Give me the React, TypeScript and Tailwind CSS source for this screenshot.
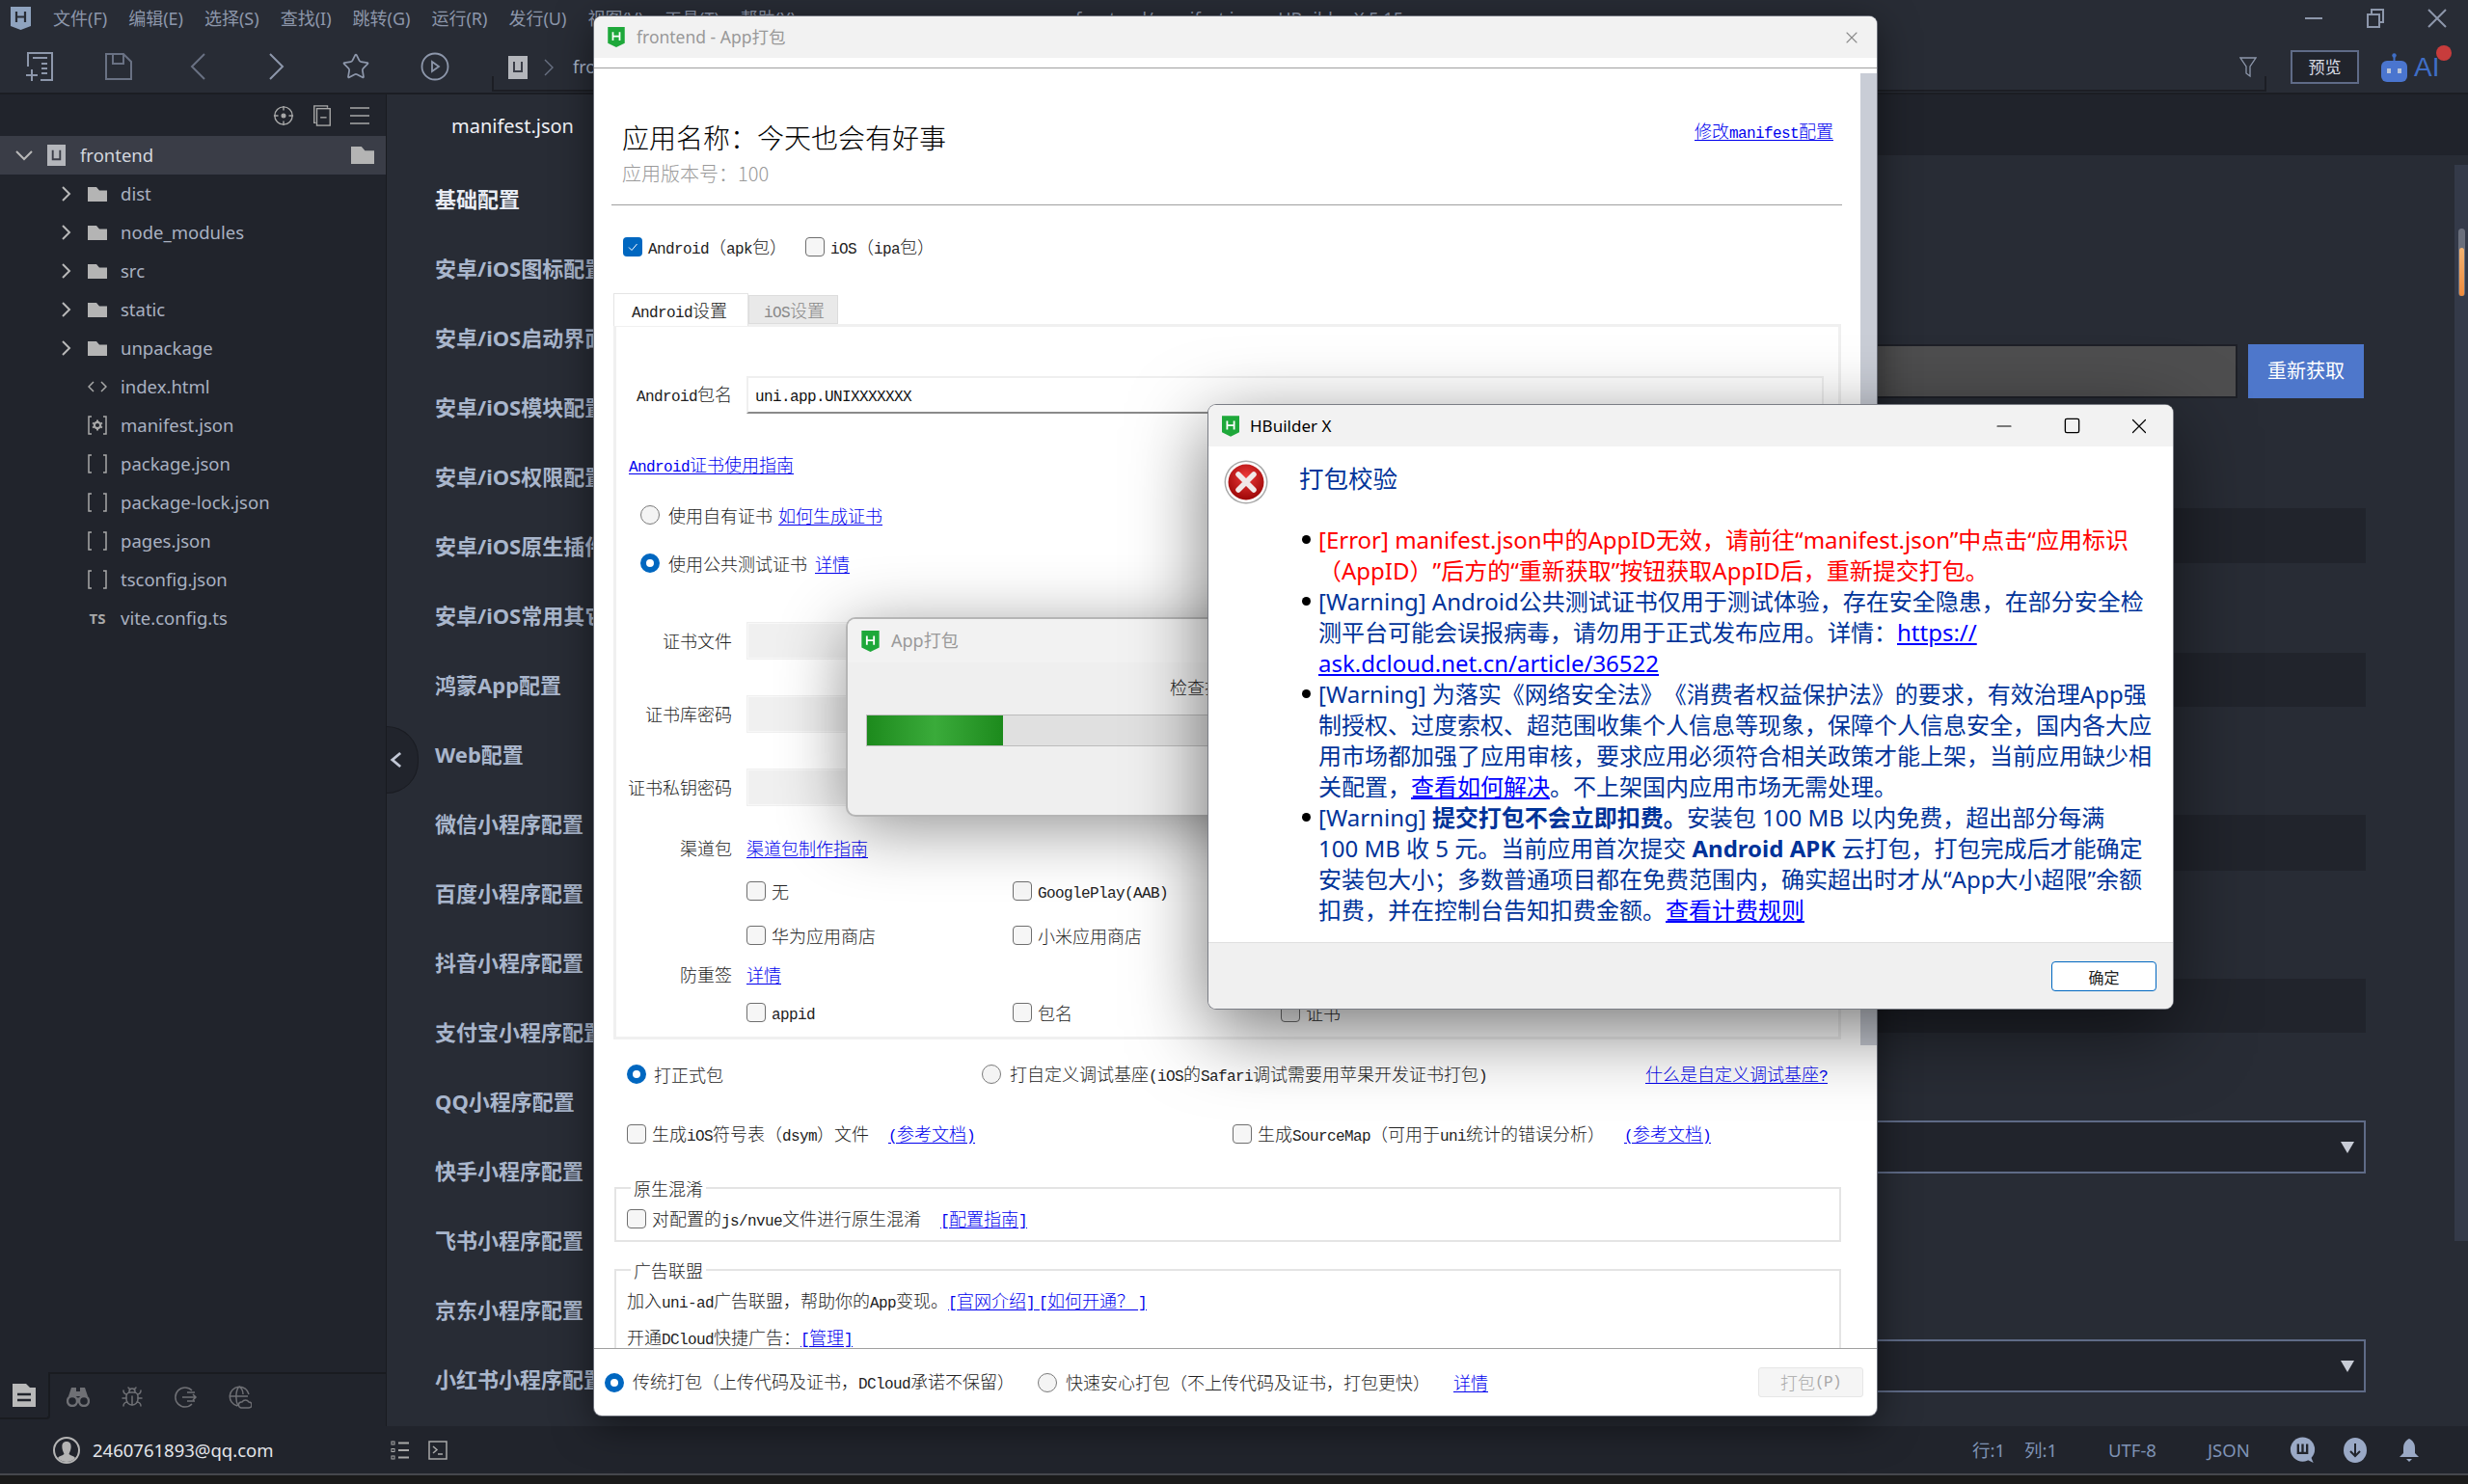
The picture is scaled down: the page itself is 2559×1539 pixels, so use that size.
import React from 'react';
import { Bug, Star, X, Minus, Square } from 'lucide-react';

const ide = "[font-family:'Noto_Sans','Noto_Sans_CJK_SC',sans-serif]";
const song = "[font-family:'Noto_Sans_CJK_SC',sans-serif]";

// latin runs are half width mono, cjk runs stay at the parent size
function S({ children }: { children: string }) {
  const parts = children.split(/([\x21-\x7e]+)/);
  return (
    <>
      {parts.map((p, i) =>
        i % 2 === 1 ? (
          <span key={i} className="[font-family:'Liberation_Mono',monospace] text-[16px] tracking-[-0.6px]">{p}</span>
        ) : (
          <span key={i}>{p}</span>
        ),
      )}
    </>
  );
}

function A({ children, className = '' }: { children: string; className?: string }) {
  return (
    <a className={`text-[#0000ee] underline underline-offset-2 whitespace-nowrap ${className}`}>
      <S>{children}</S>
    </a>
  );
}

function Shield({ className = '' }: { className?: string }) {
  return (
    <svg viewBox="0 0 20 24" className={className}>
      <path d="M0 0H20V19L10 24L0 19Z" fill="#1ea83a" />
      <path d="M6 6V16M14 6V16M6 11H14" stroke="#fff" strokeWidth="2" fill="none" />
    </svg>
  );
}

function UBox({ size = 20 }: { size?: number }) {
  return (
    <svg viewBox="0 0 20 24" width={size} height={size * 1.2} className="shrink-0">
      <rect width="20" height="24" fill="#b4b6bb" />
      <path d="M6 6V16H14V6" stroke="#3a3d47" strokeWidth="2" fill="none" />
    </svg>
  );
}

function Check({ on = false }: { on?: boolean }) {
  return on ? (
    <span className="w-5 h-5 shrink-0 rounded-[4px] bg-[#0067c0] flex items-center justify-center">
      <svg viewBox="0 0 12 12" className="w-3 h-3">
        <path d="M2 6.5L5 9.5L10.5 3" stroke="#fff" strokeWidth="1" fill="none" />
      </svg>
    </span>
  ) : (
    <span className="w-5 h-5 shrink-0 rounded-[4px] bg-[#f6f6f6] border border-[#6f6f6f]" />
  );
}

function Radio({ on = false }: { on?: boolean }) {
  return on ? (
    <span className="w-5 h-5 shrink-0 rounded-full bg-white border-[6px] border-[#0067c0]" />
  ) : (
    <span className="w-5 h-5 shrink-0 rounded-full bg-[#f4f4f4] border border-[#7a7a7a]" />
  );
}

function FormField({ label, value, mt }: { label: string; value?: string; mt: string }) {
  return (
    <div className={`flex items-center h-[39px] ${mt}`}>
      <div className="w-[120px] text-right whitespace-nowrap"><S>{label}</S></div>
      <div className={`ml-[15px] w-[1117px] h-full flex items-center px-[7px] border-2 ${value ? 'border-[#efefef] border-b-[#8a8a8a] bg-white' : 'border-[#efefef] bg-[#f0f0f0] outline outline-1 -outline-offset-2 outline-[#f8f8f8]'}`}>
        {value && <span className="text-[#111]"><S>{value}</S></span>}
      </div>
    </div>
  );
}

function CheckCell({ label, w }: { label: string; w: string }) {
  return (
    <div className={`flex items-center gap-[6px] ${w}`}>
      <Check />
      <span className="whitespace-nowrap"><S>{label}</S></span>
    </div>
  );
}

function PackDialog() {
  return (
    <div className={`absolute left-[616px] top-[17px] w-[1330px] h-[1451px] bg-white rounded-lg overflow-hidden flex flex-col ring-1 ring-[#6a6e78] shadow-[0_10px_40px_rgba(0,0,0,0.5)] text-[18px] font-light text-[#222] ${song}`}>
      <div className="h-[43px] shrink-0 bg-[#f2f2f2] flex items-center pl-[14px] pr-[16px]">
        <Shield className="w-[18px] h-[21px]" />
        <span className={`ml-3 text-[17.5px] text-[#999] font-normal ${ide}`}>frontend - App打包</span>
        <X className="ml-auto w-[20px] h-[20px] text-[#8a8a8a]" strokeWidth={1.3} />
      </div>
      <div className="mt-[10px] flex-1 min-h-0 flex border-t border-[#a0a0a0] overflow-hidden">
        <div className="w-[1313px] shrink-0 pl-[18px] pr-[19px] overflow-hidden">
          <div className="mt-[49px] h-[45px] pl-[11px] flex items-start justify-between">
            <div className="text-[28px] leading-[44px] text-black whitespace-nowrap">应用名称：今天也会有好事</div>
            <A className="mt-[2px] mr-[9px] text-[18px]">修改manifest配置</A>
          </div>
          <div className="h-[30px] pl-[11px] text-[20px] leading-[30px] text-[#9a9a9a]">应用版本号：100</div>
          <div className="mt-[17px] h-px bg-[#a0a0a0]" />

          <div className="mt-[29px] h-[28px] pl-[12px] flex items-center">
            <div className="flex items-center gap-[6px] w-[189px]"><Check on /><span className="whitespace-nowrap"><S>Android（apk包）</S></span></div>
            <div className="flex items-center gap-[6px]"><Check /><span className="whitespace-nowrap"><S>iOS（ipa包）</S></span></div>
          </div>

          <div className="mt-[34px] h-[34px] pl-[2px] flex items-end relative z-10">
            <div className="w-[140px] h-[34px] bg-white border border-b-0 border-[#e4e4e4] pl-[18px] leading-[32px] whitespace-nowrap"><S>Android设置</S></div>
            <div className="w-[93px] h-[30px] mb-[2px] bg-[#e9e9e9] border border-[#dcdcdc] pl-[15px] leading-[28px] text-[#888] whitespace-nowrap"><S>iOS设置</S></div>
          </div>

          <div className="-mt-[2px] ml-[2px] mr-[1px] h-[742px] border-[3px] border-[#f0f0f0] overflow-hidden">
            <FormField label="Android包名" value="uni.app.UNIXXXXXXX" mt="mt-[51px]" />
            <div className="mt-[40px] h-6 pl-[13px] leading-6"><A>Android证书使用指南</A></div>
            <div className="mt-[29px] h-6 pl-[25px] flex items-center gap-[9px]">
              <Radio />
              <span className="whitespace-nowrap">使用自有证书</span>
              <A className="-ml-[3px]">如何生成证书</A>
            </div>
            <div className="mt-[26px] h-6 pl-[25px] flex items-center gap-[9px]">
              <Radio on />
              <span className="whitespace-nowrap">使用公共测试证书</span>
              <A className="-ml-[1px]">详情</A>
            </div>
            <FormField label="证书文件" mt="mt-[49px]" />
            <FormField label="证书库密码" mt="mt-[37px]" />
            <FormField label="证书私钥密码" mt="mt-[37px]" />
            <div className="mt-[31px] h-6 flex items-center">
              <div className="w-[120px] text-right">渠道包</div>
              <A className="ml-[15px]">渠道包制作指南</A>
            </div>
            <div className="mt-[21px] h-6 pl-[135px] flex items-center">
              <CheckCell label="无" w="w-[276px]" />
              <CheckCell label="GooglePlay(AAB)" w="w-[278px]" />
              <CheckCell label="360应用商店" w="w-[276px]" />
            </div>
            <div className="mt-[22px] h-6 pl-[135px] flex items-center">
              <CheckCell label="华为应用商店" w="w-[276px]" />
              <CheckCell label="小米应用商店" w="w-[278px]" />
              <CheckCell label="应用宝" w="w-[276px]" />
            </div>
            <div className="mt-[16px] h-6 flex items-center">
              <div className="w-[120px] text-right">防重签</div>
              <A className="ml-[15px]">详情</A>
            </div>
            <div className="mt-[16px] h-6 pl-[135px] flex items-center">
              <CheckCell label="appid" w="w-[276px]" />
              <CheckCell label="包名" w="w-[278px]" />
              <CheckCell label="证书" w="w-[276px]" />
            </div>
          </div>

          <div className="mt-[24px] h-6 pl-[16px] flex items-center">
            <div className="w-[368px] flex items-center gap-[8px]"><Radio on /><span>打正式包</span></div>
            <div className="flex items-center gap-[9px] whitespace-nowrap"><Radio /><span><S>打自定义调试基座(iOS的Safari调试需要用苹果开发证书打包)</S></span></div>
            <A className="ml-auto mr-[15px]">什么是自定义调试基座?</A>
          </div>

          <div className="mt-[38px] h-6 pl-[16px] flex items-center">
            <div className="w-[628px] flex items-center gap-[6px]">
              <Check />
              <span className="w-[239px] whitespace-nowrap"><S>生成iOS符号表（dsym）文件</S></span>
              <A>(参考文档)</A>
            </div>
            <div className="flex items-center gap-[6px]">
              <Check />
              <span className="w-[374px] whitespace-nowrap"><S>生成SourceMap（可用于uni统计的错误分析）</S></span>
              <A>(参考文档)</A>
            </div>
          </div>

          <fieldset className="mt-[32px] ml-[3px] mr-[1px] pl-[11px] pb-[10px] border-2 border-[#e4e4e4]">
            <legend className="ml-[4px] px-[3px] h-6 leading-6">原生混淆</legend>
            <div className="mt-[8px] h-6 flex items-center gap-[6px]">
              <Check />
              <span className="whitespace-nowrap"><S>对配置的js/nvue文件进行原生混淆</S></span>
              <A className="ml-[14px]">[配置指南]</A>
            </div>
          </fieldset>

          <fieldset className="mt-[17px] ml-[3px] mr-[1px] pl-[11px] pb-[10px] border-2 border-[#e4e4e4]">
            <legend className="ml-[4px] px-[3px] h-6 leading-6">广告联盟</legend>
            <div className="mt-[7px] h-6 leading-6 whitespace-nowrap">
              <S>加入uni-ad广告联盟，帮助你的App变现。</S>
              <A>[官网介绍] [如何开通？ ]</A>
            </div>
            <div className="mt-[14px] h-6 leading-6 whitespace-nowrap">
              <S>开通DCloud快捷广告：</S>
              <A>[管理]</A>
            </div>
          </fieldset>
        </div>
        <div className="flex-1 mt-[5px]">
          <div className="h-[1008px] bg-[#c9cdd6]" />
        </div>
      </div>
      <div className="h-[70px] shrink-0 border-t border-[#a0a0a0] pl-[11px] pr-[14px] flex items-center">
        <div className="w-[449px] flex items-center gap-[9px] whitespace-nowrap"><Radio on /><span><S>传统打包（上传代码及证书，DCloud承诺不保留）</S></span></div>
        <div className="flex items-center gap-[9px] whitespace-nowrap"><Radio /><span className="w-[402px]">快速安心打包（不上传代码及证书，打包更快）</span></div>
        <A>详情</A>
        <div className="ml-auto w-[109px] h-[31px] bg-[#f5f5f5] border border-[#e6e6e6] rounded-[3px] flex items-center justify-center text-[#a8a8a8]"><S>打包(P)</S></div>
      </div>
    </div>
  );
}

function ProgressDialog() {
  return (
    <div className={`absolute left-[879px] top-[642px] w-[640px] h-[203px] bg-[#efefef] rounded-lg overflow-hidden ring-2 ring-[#b5b5b5] shadow-[0_12px_70px_rgba(0,0,0,0.45)] ${song}`}>
      <div className="h-[45px] bg-[#f2f2f2] flex items-center pl-[14px]">
        <Shield className="w-[19px] h-[22px]" />
        <span className={`ml-3 text-[18px] text-[#999] ${ide}`}>App打包</span>
      </div>
      <div className="mt-[13px] h-6 pl-[334px] text-[18px] leading-6 font-light text-[#222] whitespace-nowrap">检查打包参数...</div>
      <div className="mt-[17px] ml-[19px] mr-[19px] h-[33px] bg-[#e0e0e0] border border-[#bcbcbc]">
        <div className="w-[141px] h-full bg-gradient-to-r from-[#1c8a1c] via-[#3aab3a] to-[#1c8a1c]" />
      </div>
    </div>
  );
}

function ErrorIcon() {
  return (
    <svg viewBox="0 0 46 46" className="w-[46px] h-[46px] shrink-0 mt-[7px]">
      <defs>
        <radialGradient id="errRed" cx="50%" cy="35%" r="65%">
          <stop offset="0%" stopColor="#ee3a3a" />
          <stop offset="100%" stopColor="#9c0606" />
        </radialGradient>
      </defs>
      <circle cx="23" cy="23" r="22.5" fill="#a9a9a9" />
      <circle cx="23" cy="23" r="21" fill="#fff" />
      <circle cx="23" cy="23" r="18.5" fill="url(#errRed)" />
      <path d="M15 15L31 31M31 15L15 31" stroke="#f1e9e9" strokeWidth="5.5" strokeLinecap="round" />
    </svg>
  );
}

function Item({ children, className = '' }: { children: React.ReactNode; className?: string }) {
  return (
    <li className={`flex ${className}`}>
      <span className="w-[9px] h-[9px] mt-[11px] mr-[8px] shrink-0 rounded-full bg-black" />
      <div>{children}</div>
    </li>
  );
}

function AlertDialog() {
  const link = 'text-[#0000ff] underline';
  return (
    <div className={`absolute left-[1253px] top-[420px] w-[1000px] h-[626px] bg-white rounded-lg overflow-hidden flex flex-col ring-1 ring-[#7a7d85] shadow-[0_22px_80px_rgba(0,0,0,0.55)] ${ide}`}>
      <div className="h-[43px] shrink-0 bg-[#f2f2f2] flex items-center pl-[14px] text-black">
        <Shield className="w-[18px] h-[22px]" />
        <span className="ml-[11px] text-[17px]">HBuilder X</span>
        <div className="ml-auto w-[70px] flex justify-center"><Minus className="w-[24px] h-[24px]" strokeWidth={1.1} /></div>
        <div className="w-[70px] flex justify-center"><Square className="w-[19px] h-[19px]" strokeWidth={1.7} /></div>
        <div className="w-[70px] flex justify-center"><X className="w-[26px] h-[26px]" strokeWidth={1.1} /></div>
      </div>
      <div className="flex-1 min-h-0">
        <div className="mt-[7px] h-[52px] pl-[16px] flex items-start gap-[32px]">
          <ErrorIcon />
          <div className="text-[25.5px] leading-[52px] text-[#003399]">打包校验</div>
        </div>
        <ul className="mt-[22px] pl-[97px] text-[24px] leading-[32px] text-[#003399] whitespace-nowrap [text-spacing-trim:space-all]">
          <Item className="text-[#ff0000]">[Error] manifest.json中的AppID无效，请前往“manifest.json”中点击“应用标识<br />（AppID）”后方的“重新获取”按钮获取AppID后，重新提交打包。</Item>
          <Item>[Warning] Android公共测试证书仅用于测试体验，存在安全隐患，在部分安全检<br />测平台可能会误报病毒，请勿用于正式发布应用。详情：<a className={link}>https://<br />ask.dcloud.net.cn/article/36522</a></Item>
          <Item>[Warning] 为落实《网络安全法》《消费者权益保护法》的要求，有效治理App强<br />制授权、过度索权、超范围收集个人信息等现象，保障个人信息安全，国内各大应<br />用市场都加强了应用审核，要求应用必须符合相关政策才能上架，当前应用缺少相<br />关配置，<a className={link}>查看如何解决</a>。不上架国内应用市场无需处理。</Item>
          <Item>[Warning] <b>提交打包不会立即扣费。</b>安装包 100 MB 以内免费，超出部分每满<br />100 MB 收 5 元。当前应用首次提交 <b>Android APK</b> 云打包，打包完成后才能确定<br />安装包大小；多数普通项目都在免费范围内，确实超出时才从“App大小超限”余额<br />扣费，并在控制台告知扣费金额。<a className={link}>查看计费规则</a></Item>
        </ul>
      </div>
      <div className="h-[69px] shrink-0 bg-[#f0f0f0] border-t border-[#dfdfdf] pt-[19px] pr-[17px] flex justify-end">
        <div className={`w-[109px] h-[31px] bg-white border border-[#0067c0] rounded-[4px] flex items-center justify-center text-[16px] text-[#222] ${song}`}>确定</div>
      </div>
    </div>
  );
}

const stroke = '#8d97ab';

function MenuBar() {
  const menus = ['文件(F)', '编辑(E)', '选择(S)', '查找(I)', '跳转(G)', '运行(R)', '发行(U)', '视图(V)', '工具(T)', '帮助(Y)'];
  return (
    <div className="h-[38px] shrink-0 flex items-center">
      <div className="w-[1115px] shrink-0 flex items-center pl-[11px] gap-[23px]">
        <svg viewBox="0 0 21 24" className="w-[21px] h-[24px] shrink-0">
          <path d="M0 0H21V20L10.5 24L0 20Z" fill="#8fa3bf" />
          <path d="M6 5V16M15 5V16M6 10.5H15" stroke="#282c35" strokeWidth="2.2" fill="none" />
        </svg>
        <div className="flex gap-[22px] text-[18px] text-[#8d97ab] whitespace-nowrap">
          {menus.map((m) => <span key={m}>{m}</span>)}
        </div>
      </div>
      <span className="text-[18px] text-[#8d97ab] whitespace-nowrap">frontend/manifest.json - HBuilder X 5.15</span>
      <div className="ml-auto flex items-center">
        <div className="w-[64px] flex justify-center"><div className="w-[18px] h-[2px] bg-[#8d97ab]" /></div>
        <div className="w-[64px] flex justify-center">
          <svg viewBox="0 0 18 20" className="w-[18px] h-[20px]" fill="none" stroke={stroke} strokeWidth="2">
            <rect x="1" y="6" width="12" height="13" />
            <path d="M5 6V1H17V14H13" />
          </svg>
        </div>
        <div className="w-[64px] flex justify-center">
          <svg viewBox="0 0 20 20" className="w-5 h-5" fill="none" stroke={stroke} strokeWidth="2"><path d="M1 1L19 19M19 1L1 19" /></svg>
        </div>
      </div>
    </div>
  );
}

function ToolCell({ children }: { children: React.ReactNode }) {
  return <div className="w-[82px] flex justify-center">{children}</div>;
}

function Toolbar() {
  return (
    <div className="h-[60px] shrink-0 flex border-b-2 border-[#1b1d23]">
      <div className="mt-[9px] flex items-center w-[492px] h-[44px] shrink-0">
        <ToolCell>
          <svg viewBox="0 0 30 30" className="w-[30px] h-[30px]" fill="none" stroke={stroke} strokeWidth="2">
            <path d="M3 15V1H28V29H16M8 6H23M17 12H23M17 17H23M17 22H23" />
            <path d="M1 24H13M7 18V30" />
          </svg>
        </ToolCell>
        <ToolCell>
          <svg viewBox="0 0 28 28" className="w-[28px] h-[28px]" fill="none" stroke="#697183" strokeWidth="2">
            <path d="M1 1H19L27 9V27H1ZM8 1V11H19V1" />
          </svg>
        </ToolCell>
        <ToolCell>
          <svg viewBox="0 0 16 28" className="w-[16px] h-[28px]" fill="none" stroke="#697183" strokeWidth="2"><path d="M15 1L2 14L15 27" /></svg>
        </ToolCell>
        <ToolCell>
          <svg viewBox="0 0 16 28" className="w-[16px] h-[28px]" fill="none" stroke={stroke} strokeWidth="2"><path d="M1 1L14 14L1 27" /></svg>
        </ToolCell>
        <ToolCell><Star className="w-[30px] h-[30px] text-[#8d97ab]" strokeWidth={1.4} /></ToolCell>
        <ToolCell>
          <svg viewBox="0 0 30 30" className="w-[30px] h-[30px]" fill="none" stroke={stroke} strokeWidth="1.8">
            <circle cx="15" cy="15" r="13.5" />
            <path d="M12 10L19 15L12 20Z" />
          </svg>
        </ToolCell>
      </div>
      <div className="ml-[18px] mt-[22px] w-[1840px] shrink-0 self-start flex flex-col">
        <div className="h-[19px] pl-[17px] pr-[10px] flex items-center">
          <UBox />
          <svg viewBox="0 0 10 18" className="ml-[17px] w-[10px] h-[18px]" fill="none" stroke="#697183" strokeWidth="1.4"><path d="M1 1L9 9L1 17" /></svg>
          <span className="ml-[20px] text-[18px] text-[#a9b6cc]">frontend</span>
          <svg viewBox="0 0 18 22" className="ml-auto w-[18px] h-[22px]" fill="none" stroke="#8d97ab" strokeWidth="1.3">
            <path d="M1 1H17L11 10V20L7 17V10Z" />
          </svg>
        </div>
        <div className="h-[16px] border-x-2 border-b-2 border-[#1c1e24]" />
      </div>
      <div className="ml-[25px] mt-[14px] w-[71px] h-[35px] bg-[#21242c] border-2 border-[#5f6b87] flex items-center justify-center text-[17px] text-[#d8dce5]">预览</div>
      <div className="ml-[23px] mt-[17px] relative flex items-center h-[30px]">
        <svg viewBox="0 0 27 30" className="w-[27px] h-[30px]">
          <circle cx="13.5" cy="2.5" r="2.2" fill="#3f6ec6" />
          <path d="M13.5 3V9" stroke="#3f6ec6" strokeWidth="2" />
          <rect y="8" width="27" height="22" rx="6" fill="#4a75cf" />
          <rect x="6" y="16" width="4" height="5" fill="#b9c4d8" />
          <rect x="17" y="16" width="4" height="5" fill="#b9c4d8" />
        </svg>
        <span className="ml-[7px] text-[28px] leading-[30px] text-[#3f6ec6] [font-family:'Liberation_Sans',sans-serif]">AI</span>
        <span className="absolute -right-[13px] -top-[8px] w-4 h-4 rounded-full bg-[#c83c3c]" />
      </div>
    </div>
  );
}

function FolderIcon({ className = '' }: { className?: string }) {
  return (
    <svg viewBox="0 0 20 15" className={className} preserveAspectRatio="none"><path d="M0 0H9L12 3.5H20V15H0Z" fill="#b4b4b4" /></svg>
  );
}

function Caret() {
  return (
    <svg viewBox="0 0 10 16" className="w-[10px] h-[16px] shrink-0" fill="none" stroke="#b8b8b8" strokeWidth="2"><path d="M1 1L8 8L1 15" /></svg>
  );
}

function FileIcon({ kind }: { kind: string }) {
  if (kind === 'ts') return <span className="w-[20px] text-center text-[15px] font-bold text-[#a8a8a8]">TS</span>;
  return (
    <svg viewBox="0 0 20 20" className="w-[20px] h-[20px] shrink-0" fill="none" stroke="#a8a8a8" strokeWidth="1.5">
      {kind === 'html' ? (
        <path d="M6 5L1 10L6 15M14 5L19 10L14 15" />
      ) : (
        <path d="M4 1H1V19H4M16 1H19V19H16" />
      )}
      {kind === 'manifest' && (
        <>
          <circle cx="10" cy="10" r="3.2" fill="none" strokeWidth="2.2" />
          <path d="M10 4.5V6.5M10 13.5V15.5M5 7.5L6.7 8.5M13.3 11.5L15 12.5M15 7.5L13.3 8.5M6.7 11.5L5 12.5" strokeWidth="2" />
        </>
      )}
    </svg>
  );
}

const files = [
  { kind: 'html', name: 'index.html' },
  { kind: 'manifest', name: 'manifest.json' },
  { kind: 'json', name: 'package.json' },
  { kind: 'json', name: 'package-lock.json' },
  { kind: 'json', name: 'pages.json' },
  { kind: 'json', name: 'tsconfig.json' },
  { kind: 'ts', name: 'vite.config.ts' },
];

function Sidebar() {
  return (
    <div className={`w-[401px] shrink-0 bg-[#21242c] border-r border-[#191b20] flex flex-col text-[18.5px] text-[#a9b1c1] ${ide}`}>
      <div className="h-[43px] shrink-0 flex items-center justify-end pr-[17px] gap-[19px] text-[#a8a8a8]">
        <svg viewBox="0 0 24 24" className="w-[22px] h-[22px]" fill="none" stroke="currentColor" strokeWidth="1.5">
          <circle cx="12" cy="12" r="10" />
          <circle cx="12" cy="12" r="2" fill="currentColor" />
          <path d="M12 1V6M12 18V23M1 12H6M18 12H23" />
        </svg>
        <svg viewBox="0 0 20 24" className="w-[20px] h-[22px]" fill="none" stroke="currentColor" strokeWidth="1.5">
          <path d="M3 20H1V1H16V3" />
          <rect x="4" y="4" width="15" height="19" />
          <path d="M8 14H15" />
        </svg>
        <svg viewBox="0 0 20 20" className="w-[20px] h-[20px]" fill="none" stroke="currentColor" strokeWidth="1.6">
          <path d="M0 2H20M0 10H20M0 18H20" />
        </svg>
      </div>
      <div className="h-[40px] shrink-0 bg-[#3a3d47] flex items-center pl-[16px] pr-[12px] text-[#d3d7df]">
        <svg viewBox="0 0 18 11" className="w-[18px] h-[11px] shrink-0" fill="none" stroke="#b8b8b8" strokeWidth="2"><path d="M1 1L9 9L17 1" /></svg>
        <span className="ml-[15px]"><UBox size={19} /></span>
        <span className="ml-[15px]">frontend</span>
        <FolderIcon className="ml-auto w-[24px] h-[18px]" />
      </div>
      {['dist', 'node_modules', 'src', 'static', 'unpackage'].map((d) => (
        <div key={d} className="h-[40px] shrink-0 flex items-center pl-[64px]">
          <Caret />
          <FolderIcon className="ml-[17px] w-[20px] h-[15px]" />
          <span className="ml-[14px]">{d}</span>
        </div>
      ))}
      {files.map((f) => (
        <div key={f.name} className="h-[40px] shrink-0 flex items-center pl-[91px]">
          <FileIcon kind={f.kind} />
          <span className="ml-[14px]">{f.name}</span>
        </div>
      ))}
      <div className="mt-auto h-[56px] shrink-0 flex text-[#6f7075]">
        <div className="w-[52px] h-[49px] border-r-2 border-b-2 border-[#191b20] rounded-br flex items-center justify-center">
          <svg viewBox="0 0 24 24" className="w-[24px] h-[24px]">
            <path d="M0 0H14L18 4H24V24H0Z" fill="#b9b9b9" />
            <path d="M5 11H19M5 17H19" stroke="#21242c" strokeWidth="2.5" />
          </svg>
        </div>
        <div className="flex-1 border-t-2 border-[#191b20] flex items-center pl-[17px] gap-[32px] pb-[6px]">
          <svg viewBox="0 0 24 20" className="w-[24px] h-[20px]">
            <path d="M5 0H10V4H14V0H19L22 9H2Z" fill="currentColor" />
            <circle cx="6" cy="14" r="5" fill="none" stroke="currentColor" strokeWidth="2.4" />
            <circle cx="18" cy="14" r="5" fill="none" stroke="currentColor" strokeWidth="2.4" />
            <path d="M11 12H13" stroke="currentColor" strokeWidth="3" />
          </svg>
          <Bug className="w-[24px] h-[24px]" strokeWidth={1.5} />
          <svg viewBox="0 0 24 24" className="w-[24px] h-[24px]" fill="none" stroke="currentColor" strokeWidth="1.5">
            <path d="M18 5A10 10 0 1 0 18 19M8 12H22M19 9L22 12L19 15M13 16H21M13 7H21" />
          </svg>
          <svg viewBox="0 0 24 24" className="w-[24px] h-[24px]" fill="none" stroke="currentColor" strokeWidth="1.5">
            <path d="M9 21A10 10 0 1 1 21 9M1 11H20M11 1C7 5 7 16 10 21M11 1C14 3 15 6 15 9" />
            <path d="M13 23H21A3 3 0 0 0 21 17A4 4 0 0 0 14 17A3 3 0 0 0 13 23Z" />
          </svg>
        </div>
      </div>
    </div>
  );
}

const navItems = [
  '基础配置', '安卓/iOS图标配置', '安卓/iOS启动界面配置', '安卓/iOS模块配置', '安卓/iOS权限配置', '安卓/iOS原生插件配置',
  '安卓/iOS常用其它设置', '鸿蒙App配置', 'Web配置', '微信小程序配置', '百度小程序配置', '抖音小程序配置',
  '支付宝小程序配置', 'QQ小程序配置', '快手小程序配置', '飞书小程序配置', '京东小程序配置', '小红书小程序配置',
];

function SelectBox({ mt }: { mt: string }) {
  return (
    <div className={`${mt} h-[55px] bg-[#21242c] border-2 border-[#5f6b87] flex items-center justify-end pr-[10px]`}>
      <svg viewBox="0 0 14 12" className="w-[14px] h-[12px]"><path d="M0 0H14L7 12Z" fill="#c8ccd6" /></svg>
    </div>
  );
}

function Editor() {
  return (
    <div className="flex-1 min-w-0 bg-[#282c35] relative flex flex-col">
      <div className={`h-[63px] shrink-0 bg-[#20232b] flex ${ide}`}>
        <div className="w-[300px] bg-[#282c35] pl-[67px] text-[20px] leading-[66px] text-[#eef0f4]">manifest.json</div>
      </div>
      <div className="flex-1 min-h-0 flex">
        <div className={`w-[320px] shrink-0 pt-[9px] pl-[50px] text-[22px] font-bold text-[#a9b6cc] whitespace-nowrap ${ide}`}>
          {navItems.map((n, i) => (
            <div key={n} className={`h-[72px] leading-[72px] ${i === 0 ? 'text-[#e8ecf4]' : ''}`}>{n}</div>
          ))}
        </div>
        <div className="flex-1 min-w-0 pr-[106px]">
          <div className="mt-[196px] h-[56px] flex gap-[11px] pr-[2px]">
            <div className="flex-1 bg-[#4e4e4f] border-2 border-[#1e2027]" />
            <div className={`w-[120px] bg-[#4e77cb] flex items-center justify-center text-[20px] text-white ${ide}`}>重新获取</div>
          </div>
          <div className="mt-[114px] h-[57px] bg-[#21242c]" />
          <div className="mt-[93px] h-[56px] bg-[#21242c]" />
          <div className="mt-[112px] h-[58px] bg-[#21242c]" />
          <div className="mt-[112px] h-[56px] bg-[#21242c]" />
          <SelectBox mt="mt-[91px]" />
          <SelectBox mt="mt-[172px]" />
        </div>
      </div>
      {/* collapse handle sits over the divider */}
      <div className="absolute left-0 top-[655px] w-[33px] h-[70px] rounded-r-full bg-[#21242c] border border-l-0 border-[#1a1c22] flex items-center pl-[3px]">
        <svg viewBox="0 0 14 18" className="w-[13px] h-[18px]" fill="none" stroke="#c2c8d6" strokeWidth="3"><path d="M12 1.5L3 9L12 16.5" /></svg>
      </div>
      {/* editor scrollbar + minimap marker */}
      <div className="absolute right-0 top-[73px] w-[14px] h-[1116px] bg-[#343a49]">
        <div className="absolute left-[4px] top-[66px] w-[7px] h-[70px] rounded bg-[#6a6f7c]">
          <div className="absolute left-[1px] right-[1px] bottom-0 top-[20px] rounded bg-gradient-to-b from-[#f2b372] to-[#ee8a3a]" />
        </div>
      </div>
    </div>
  );
}

function StatusBar() {
  return (
    <div className={`h-[49px] shrink-0 bg-[#21242c] flex items-center text-[18.5px] ${ide}`}>
      <svg viewBox="0 0 28 28" className="ml-[55px] w-[28px] h-[28px] shrink-0">
        <circle cx="14" cy="14" r="13" fill="none" stroke="#b4b4b4" strokeWidth="2" />
        <path d="M14 5C10 5 9 8 9.5 12C10 15 11 16 11.5 18C9 20 6 20 5 22A12 12 0 0 0 23 22C22 20 19 20 16.5 18C17 16 18 15 18.5 12C19 8 18 5 14 5Z" fill="#b4b4b4" />
      </svg>
      <span className="ml-[13px] w-[305px] text-[#e3e5ea] whitespace-nowrap">2460761893@qq.com</span>
      <svg viewBox="0 0 20 20" className="w-[20px] h-[20px] shrink-0 ml-[4px]" fill="none" stroke="#a8a8a8" strokeWidth="2">
        <rect x="1" y="1" width="3" height="3" strokeWidth="1" /><rect x="1" y="8.5" width="3" height="3" strokeWidth="1" /><rect x="1" y="16" width="3" height="3" strokeWidth="1" />
        <path d="M8 2.5H19M8 10H19M8 17.5H19" />
      </svg>
      <svg viewBox="0 0 20 20" className="ml-[19px] w-[20px] h-[20px] shrink-0" fill="none" stroke="#a8a8a8" strokeWidth="1.5">
        <rect x="1" y="1" width="18" height="18" />
        <path d="M5 6L9 9.5L5 13M10 14H15" />
      </svg>
      <div className="ml-auto flex items-center text-[#7f93b5] whitespace-nowrap">
        <span className="w-[54px]">行:1</span>
        <span className="w-[87px]">列:1</span>
        <span className="w-[103px]">UTF-8</span>
        <span className="w-[85px]">JSON</span>
        <svg viewBox="0 0 28 30" className="w-[27px] h-[28px]">
          <circle cx="14" cy="14" r="13.5" fill="#9aa9c6" />
          <path d="M18 25L26 29L23 22Z" fill="#9aa9c6" />
          <path d="M9 8V18H19V8M14 8V18" stroke="#21242c" strokeWidth="2.5" fill="none" />
        </svg>
        <svg viewBox="0 0 24 28" className="ml-[29px] w-[24px] h-[28px]">
          <ellipse cx="12" cy="14" rx="12" ry="13" fill="#9aa9c6" />
          <path d="M12 7V20M7 15L12 20L17 15" stroke="#21242c" strokeWidth="2" fill="none" />
        </svg>
        <svg viewBox="0 0 20 24" className="ml-[34px] mr-[51px] w-[20px] h-[26px]">
          <path d="M10 0C6 2 4 5 4 10V15L0 19H20L16 15V10C16 5 14 2 10 0Z" fill="#9aa9c6" />
          <path d="M7 21H13L10 24Z" fill="#9aa9c6" />
        </svg>
      </div>
    </div>
  );
}

export default function App() {
  return (
    <div className={`relative w-[2559px] h-[1539px] overflow-hidden bg-[#282c35] flex flex-col ${ide}`}>
      <div className="h-[98px] shrink-0 flex flex-col">
        <MenuBar />
        <Toolbar />
      </div>
      <div className="flex-1 min-h-0 flex">
        <Sidebar />
        <Editor />
      </div>
      <StatusBar />
      <div className="h-[11px] shrink-0 bg-[#1a1a1a] border-t-2 border-[#45474d]" />
      <PackDialog />
      <ProgressDialog />
      <AlertDialog />
    </div>
  );
}
